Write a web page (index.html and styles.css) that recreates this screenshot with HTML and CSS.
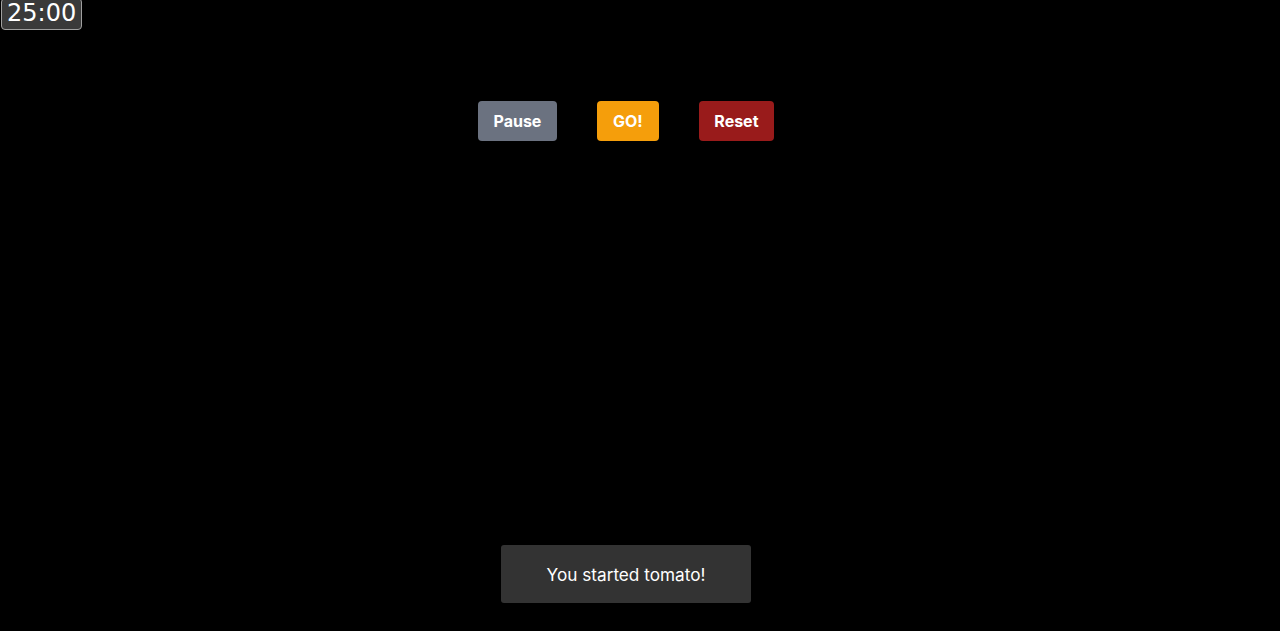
FILE: index.html
```html
<!DOCTYPE html>
<html lang="en">
<head>
<meta charset="utf-8">
<title>Tomato Timer</title>
<link rel="stylesheet" href="styles.css">
</head>
<body>
<div class="timer">25:00</div>
<main class="main">
  <div class="controls">
    <button class="btn btn-pause">Pause</button>
    <button class="btn btn-go">GO!</button>
    <button class="btn btn-reset">Reset</button>
  </div>
</main>
<div class="toast">You started tomato!</div>
</body>
</html>
```
FILE: styles.css
```css
html, body {
  margin: 0;
  padding: 0;
  background: #000;
  height: 100%;
  font-family: Inter, "Noto Sans", sans-serif;
}
.timer {
  position: absolute;
  top: -2px;
  left: 1px;
  box-sizing: border-box;
  height: 32px;
  padding: 0 5px 0 5px;
  background: #3a3a3a;
  border: 1px solid #a0a0a0;
  border-radius: 4px;
  color: #fff;
  font-family: "DejaVu Sans", sans-serif;
  font-size: 24px;
  line-height: 28px;
}
.main {
  width: 1252px;
  padding-top: 101px;
}
.controls {
  display: flex;
  justify-content: center;
  gap: 40px;
}
.btn {
  border: 0;
  border-radius: 4px;
  padding: 8px 15.8px;
  font-family: Inter, sans-serif;
  font-weight: 700;
  font-size: 16px;
  line-height: 24px;
  color: #fff;
  cursor: pointer;
}
.btn-pause { background: #6b7280; }
.btn-go { background: #f59e0b; }
.btn-reset { background: #991b1b; }
.toast {
  position: fixed;
  bottom: 28px;
  left: 501px;
  width: 250px;
  height: 58px;
  box-sizing: border-box;
  display: flex;
  align-items: center;
  justify-content: center;
  background: #333;
  border-radius: 3px;
  color: #fff;
  font-size: 17.2px;
}
```
